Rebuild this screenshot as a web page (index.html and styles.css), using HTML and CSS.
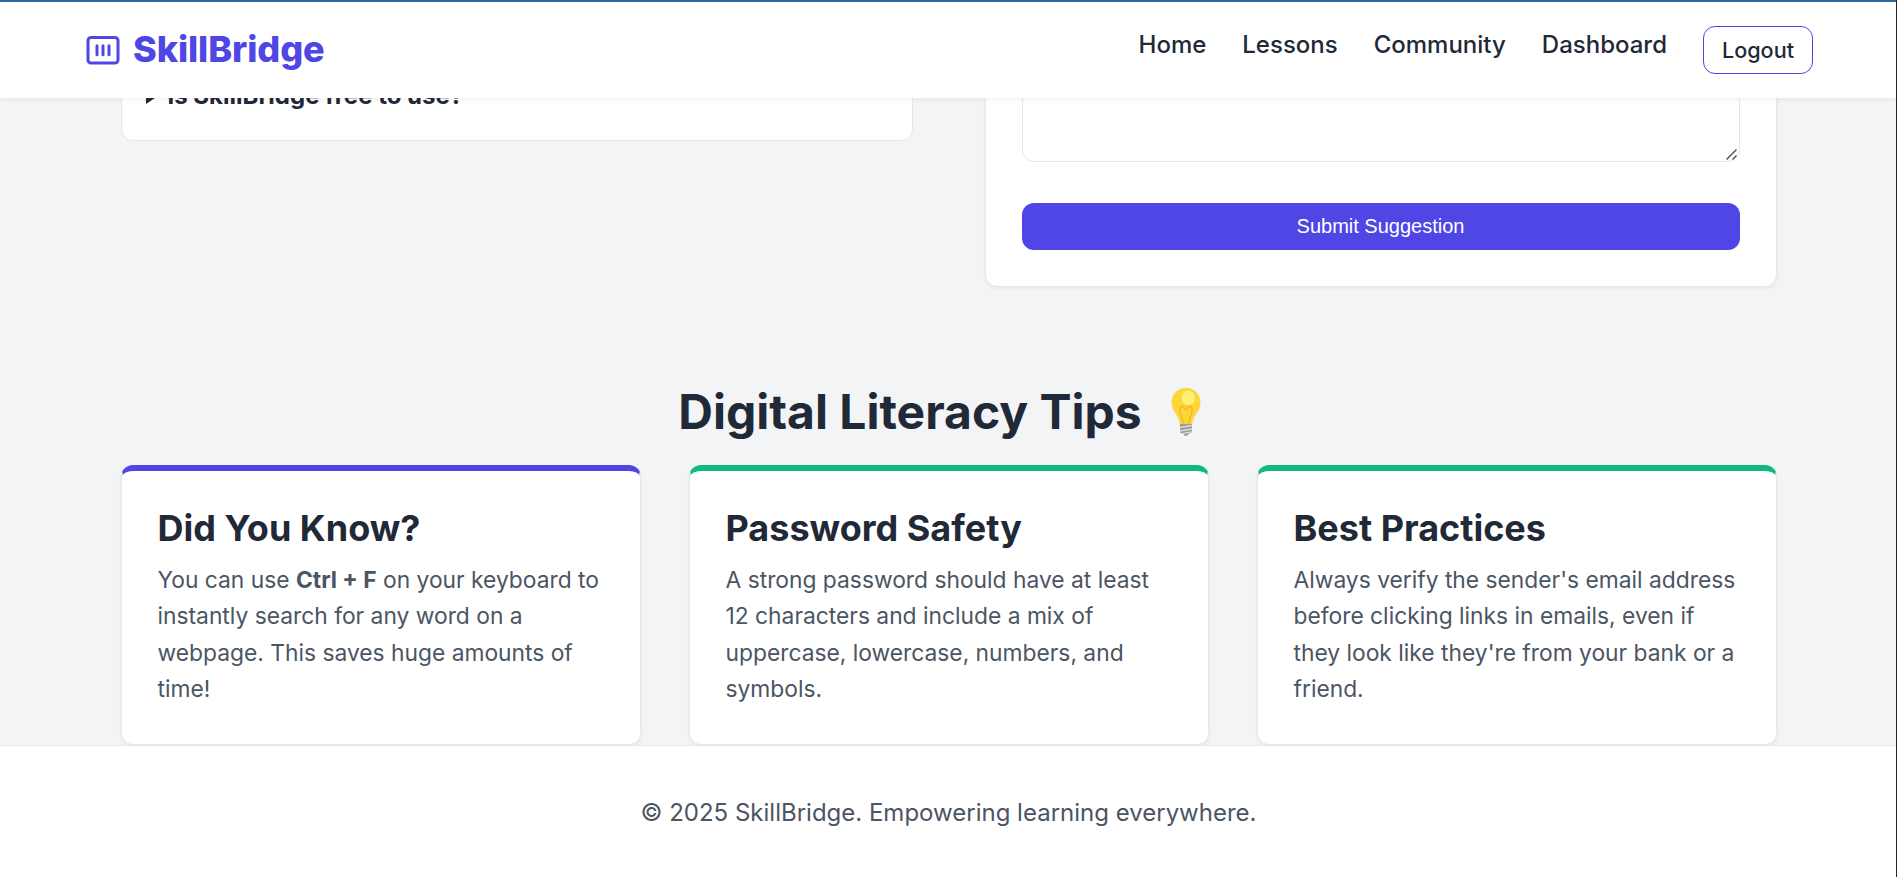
FILE: index.html
```html
<!DOCTYPE html>
<html lang="en">
<head>
    <meta charset="UTF-8">
    <meta name="viewport" content="width=device-width, initial-scale=1.0">
    <title>SkillBridge</title>
    <link rel="stylesheet" href="styles.css">
</head>
<body>
    <header class="header">
        <a class="logo" href="#">
            <svg class="logo-icon" viewBox="0 0 24 24" fill="none" stroke="currentColor" stroke-width="2" stroke-linecap="round" stroke-linejoin="round">
                <rect x="2" y="3.7" width="20" height="17" rx="2"/>
                <path d="M8 9.200v6M12 9.200v6M16 9.200v6"/>
            </svg>
            <span>SkillBridge</span>
        </a>
        <nav class="nav">
            <a href="#">Home</a>
            <a href="#">Lessons</a>
            <a href="#">Community</a>
            <a href="#">Dashboard</a>
            <a href="#" class="btn-logout">Logout</a>
        </nav>
    </header>

    <main class="main">
        <section class="help-grid">
            <div class="faq-item">
                <svg class="faq-arrow" viewBox="0 0 12 16"><path d="M0 0l12 8-12 8z" fill="currentColor"/></svg>
                <span>Is SkillBridge free to use?</span>
            </div>
            <form class="suggest-card">
                <div class="textarea-wrap">
                    <textarea></textarea>
                    <svg class="grip" viewBox="0 0 11 11" fill="none" stroke="#555" stroke-width="1.5"><path d="M0.5 10.5l10-10M6.5 10.5l4-4"/></svg>
                </div>
                <button type="button" class="btn-submit">Submit Suggestion</button>
            </form>
        </section>

        <section class="tips">
            <h2 class="tips-title">
                <span>Digital Literacy Tips</span>
                <svg class="bulb" viewBox="0 0 30 48">
                    <path d="M15 0C6.500 0 .5 6.300.5 14.500c0 6.500 3.200 9.500 5.600 13.500 1.700 2.800 2.400 5 2.700 8.500h12.400c.3-3.500 1-5.700 2.700-8.500 2.400-4 5.600-7 5.600-13.500C29.500 6.300 23.500 0 15 0z" fill="#fdd63a"/>
                    <path d="M12.500 36.500c0-5-3.500-9.500-3.700-14 0-3 1.400-4.500 3-4.300 2 .3 1.200 3.700 3.200 3.700s1.200-3.400 3.200-3.700c1.600-.2 3 1.300 3 4.300-.2 4.500-3.700 9-3.700 14" fill="none" stroke="#ffb02b" stroke-width="1.500"/>
                    <ellipse cx="17.300" cy="10" rx="6.600" ry="7.300" fill="#fff176"/>
                    <path d="M9 36h12v8.500l-3.500 1.500c-.6 1.300-1.500 2-2.500 2s-1.900-.7-2.500-2L9 44.500z" fill="#9a9a9a"/>
                    <path d="M9 39.500l12-2M9 43l12-2M11 45.700l10-1.900" stroke="#dcdcdc" stroke-width="1.300"/>
                </svg>
            </h2>
            <div class="tips-grid">
                <article class="tip-card primary">
                    <h3>Did You Know?</h3>
                    <p>You can use <strong>Ctrl + F</strong> on your keyboard to instantly search for any word on a webpage. This saves huge amounts of time!</p>
                </article>
                <article class="tip-card">
                    <h3>Password Safety</h3>
                    <p>A strong password should have at least 12 characters and include a mix of uppercase, lowercase, numbers, and symbols.</p>
                </article>
                <article class="tip-card">
                    <h3>Best Practices</h3>
                    <p>Always verify the sender's email address before clicking links in emails, even if they look like they're from your bank or a friend.</p>
                </article>
            </div>
        </section>
    </main>

    <footer class="footer">
        <p>&copy; 2025 SkillBridge. Empowering learning everywhere.</p>
    </footer>
</body>
</html>
```

FILE: styles.css
```css
:root {
    --primary: #4f46e5;
    --secondary: #10b981;
    --text: #1f2937;
    --text-light: #4b5563;
    --border: #e5e7eb;
    --bg: #f3f4f6;
    --shadow: 0 2px 4px rgba(0, 0, 0, 0.05);
}

* {
    margin: 0;
    padding: 0;
    box-sizing: border-box;
}

body {
    height: 877px;
    overflow: hidden;
    display: flex;
    flex-direction: column;
    font-family: Inter, sans-serif;
    font-size: 24px;
    line-height: 1.6;
    color: var(--text);
    background-color: var(--bg);
    border-right: 1px solid #242424;
}

a {
    color: inherit;
    text-decoration: none;
}

/* Header */
.header {
    position: relative;
    z-index: 10;
    flex: none;
    height: 98px;
    padding: 0 83px 0 85px;
    display: flex;
    justify-content: space-between;
    align-items: center;
    background-color: #fff;
    border-top: 2px solid #2f69a8;
    box-shadow: var(--shadow);
}

.logo {
    display: flex;
    align-items: center;
    gap: 12px;
    font-size: 36px;
    font-weight: 800;
    letter-spacing: -0.1px;
    color: var(--primary);
}

.logo-icon {
    width: 36px;
    height: 36px;
}

.nav {
    display: flex;
    align-items: flex-start;
    gap: 36px;
    font-weight: 500;
}

.btn-logout {
    height: 48px;
    padding: 0 18px;
    font-size: 21.6px;
    line-height: 46px;
    border: 1px solid var(--primary);
    border-radius: 12px;
}

/* FAQ and suggestion form */
.main {
    width: 1656px;
    flex: none;
    margin: -46px 119.5px 0 120.5px;
}

.help-grid {
    display: grid;
    grid-template-columns: 1fr 1fr;
    gap: 72px;
    align-items: start;
}

.faq-item {
    display: flex;
    align-items: center;
    gap: 10px;
    padding: 24px 24px 25px;
    font-weight: 700;
    background-color: #fff;
    border: 1px solid var(--border);
    border-radius: 12px;
}

.faq-arrow {
    width: 12px;
    height: 16px;
}

.suggest-card {
    height: 235px;
    padding: 36px;
    background-color: #fff;
    border: 1px solid var(--border);
    border-radius: 12px;
    box-shadow: var(--shadow);
}

.textarea-wrap {
    position: relative;
    height: 73px;
    margin-bottom: 41px;
}

textarea {
    display: block;
    width: 100%;
    height: 100%;
    resize: none;
    background-color: #fff;
    border: 1px solid var(--border);
    border-radius: 12px;
}

.grip {
    position: absolute;
    right: 3px;
    bottom: 2px;
    width: 11px;
    height: 11px;
}

.btn-submit {
    display: block;
    width: 100%;
    height: 47px;
    font-family: "Liberation Sans", Arial, sans-serif;
    font-size: 20px;
    color: #fff;
    background-color: var(--primary);
    border: none;
    border-radius: 12px;
}

/* Tips */
.tips {
    margin-top: 87px;
}

.tips-title {
    display: flex;
    justify-content: center;
    align-items: center;
    gap: 29px;
    height: 77px;
    margin-bottom: 14px;
    padding-right: 18px;
    font-size: 48px;
    font-weight: 700;
}

.bulb {
    width: 30px;
    height: 48px;
    margin-bottom: 1px;
}

.tips-grid {
    display: grid;
    grid-template-columns: repeat(3, 1fr);
    gap: 48px;
}

.tip-card {
    height: 280px;
    padding: 36px;
    background-color: #fff;
    border: 1px solid var(--border);
    border-top: 6px solid var(--secondary);
    border-radius: 12px;
    box-shadow: var(--shadow);
}

.tip-card.primary {
    border-top-color: var(--primary);
}

.tip-card h3 {
    margin-bottom: 12px;
    font-size: 36px;
    font-weight: 700;
    line-height: 43px;
}

.tip-card p {
    font-size: 22.8px;
    color: var(--text-light);
}

/* Footer */
.footer {
    position: relative;
    flex: 1;
    padding: 48px 0 0 1px;
    text-align: center;
    color: var(--text-light);
    background-color: #fff;
    border-top: 1px solid var(--border);
}
```
